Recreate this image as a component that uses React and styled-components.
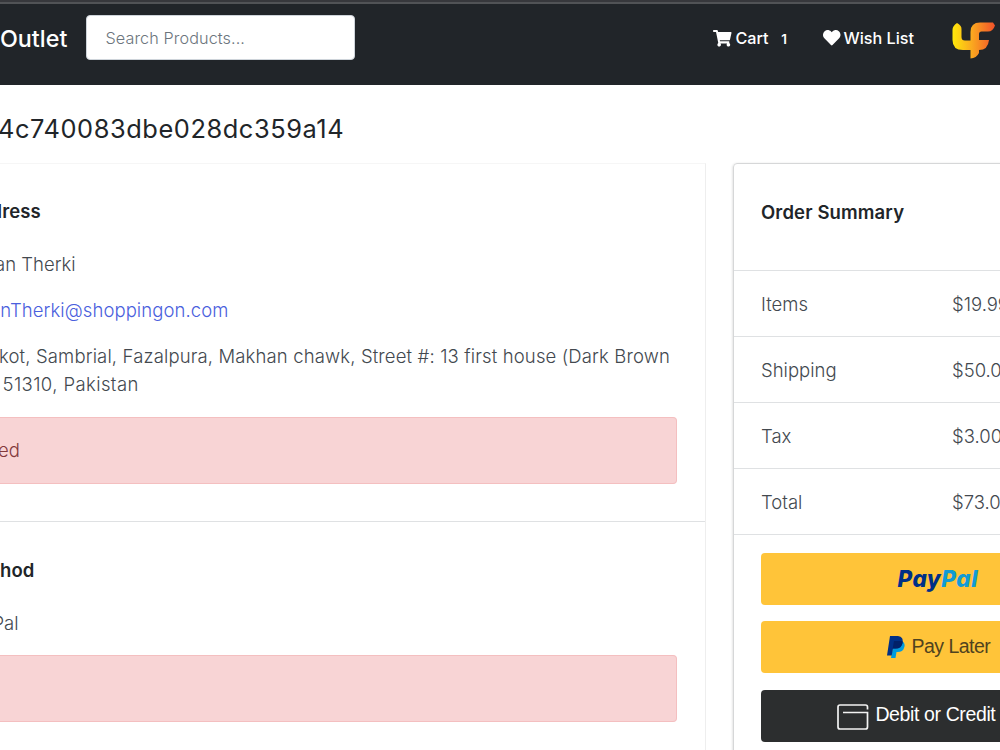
import React from 'react';
import styled, { createGlobalStyle } from 'styled-components';
import { FaShoppingCart, FaHeart } from 'react-icons/fa';

const GlobalStyle = createGlobalStyle`
  * { box-sizing: border-box; }
  body {
    margin: 0;
    background: #fff;
    color: #43494f;
    font-family: Inter, "Liberation Sans", sans-serif;
    font-size: 18.5px;
    font-weight: 350;
    line-height: 27.7px;
    overflow: hidden;
  }
  h1, h2, p { margin: 0; }
`;

const Page = styled.div`
  width: 1000px;
  height: 750px;
  overflow: hidden;
  white-space: nowrap;
`;

const Header = styled.header`
  height: 85px;
  display: flex;
  align-items: flex-start;
  background: #212529;
  border-top: 2px solid #37383c;
  box-shadow: inset 0 2px 0 #515356;
  color: #fff;
`;

const Brand = styled.div`
  width: 86px;
  padding-top: 22.5px;
  font-size: 23.3px;
  font-weight: 500;
`;

const Search = styled.input`
  width: 269px;
  height: 45px;
  margin-top: 13px;
  padding: 0 18.5px;
  border: 1px solid #ced4da;
  border-radius: 4px;
  background: #fff;
  font: 340 16.2px Inter, sans-serif;
  letter-spacing: 0.1px;
  outline: 0;
  &::placeholder { color: #6c757d; opacity: 1; }
`;

const Nav = styled.nav`
  display: flex;
  align-items: center;
  height: 44px;
  margin: 14px 0 0 358px;
  font-size: 16.2px;
  line-height: 28px;
  font-weight: 500;
`;

const NavItem = styled.a`
  display: flex;
  align-items: center;
  gap: ${(p) => p.$gap}px;
  width: ${(p) => p.$width}px;
`;

const Count = styled.span`
  margin-left: 8.5px;
  font-size: 13.5px;
  font-weight: 600;
  position: relative;
  top: 1px;
`;

const LogoSvg = styled.svg`
  flex: none;
  margin-top: 6px;
`;

const Title = styled.h1`
  height: 78px;
  padding-top: 26px;
  margin-left: -2px;
  color: #212529;
  font-size: 25.4px;
  line-height: 36px;
  font-weight: 410;
  letter-spacing: 0.57px;
`;

const Columns = styled.main`
  display: flex;
  gap: 27px;
  height: 600px;
`;

const Details = styled.div`
  width: 706px;
  flex: none;
  border: 1px solid #eee;
  border-left: 0;
  border-top-color: #f6f6f6;
  border-bottom: 0;
`;

const Section = styled.section`
  height: ${(p) => p.$height}px;
  padding: ${(p) => p.$top}px 28px 0 0;
  border-bottom: 1px solid #dfe1e3;
`;

const Heading = styled.h2`
  margin: 0 0 26px ${(p) => p.$shift || 0}px;
  color: #212529;
  font-size: 18.5px;
  line-height: 28px;
  font-weight: 600;
  letter-spacing: 0.13px;
`;

const Line = styled.p`
  margin: 0 0 ${(p) => p.$after || 18.5}px ${(p) => p.$shift || 0}px;
  letter-spacing: ${(p) => p.$spacing || 0}px;
`;

const PostalLine = styled.span`
  display: block;
  padding-left: 3.5px;
  letter-spacing: 0.4px;
`;

const Email = styled.a`
  color: #4a60dd;
`;

const Alert = styled.div`
  height: 67px;
  padding: 19px 0;
  border: 1px solid #f4bfc0;
  border-left: 0;
  border-radius: 0 4px 4px 0;
  background: #f8d4d5;
  color: #83393c;
  text-indent: -2px;
`;

const Summary = styled.aside`
  width: 290px;
  flex: none;
  border: 1px solid #d6d7d8;
  border-radius: 4px 0 0 0;
  box-shadow: 0 1px 3px rgba(0, 0, 0, 0.2);
`;

const SummaryTitle = styled.div`
  height: 107px;
  padding: 34px 27px 0;
  border-bottom: 1px solid #dfe1e3;
`;

const Row = styled.div`
  display: flex;
  align-items: center;
  height: 66px;
  padding: 1px 0 0 27px;
  border-bottom: 1px solid #dfe1e3;
  line-height: 28px;
`;

const Label = styled.span`
  width: 191px;
`;

const Buttons = styled.div`
  display: grid;
  gap: 16.3px;
  padding: 18.2px 0 0 27.4px;
`;

const PayButton = styled.div`
  display: flex;
  align-items: center;
  height: 52px;
  padding-left: ${(p) => p.$inset}px;
  padding-bottom: 1.5px;
  gap: ${(p) => p.$gap || 0}px;
  border-radius: 4px;
  background: ${(p) => (p.$dark ? '#2c2e2f' : '#ffc439')};
  color: ${(p) => (p.$dark ? '#fff' : '#4f431f')};
  font-family: "Liberation Sans", Arial, sans-serif;
  font-size: 19.5px;
  font-weight: 400;
  letter-spacing: ${(p) => (p.$dark ? -0.38 : -0.5)}px;
`;

const Wordmark = styled.span`
  color: #003087;
  font-family: Inter, sans-serif;
  font-size: 22.5px;
  font-style: italic;
  font-weight: 800;
  letter-spacing: 0.55px;
  font-feature-settings: "cv11";
`;

const WordmarkEnd = styled.span`
  color: #119bd5;
`;

const CardSvg = styled.svg`
  flex: none;
  margin-top: 4px;
`;

const rows = [
  ['Items', '$19.99'],
  ['Shipping', '$50.00'],
  ['Tax', '$3.00'],
  ['Total', '$73.00'],
];

const Logo = () => (
  <LogoSvg width="44" height="38" viewBox="0 0 44 38">
    <defs>
      <linearGradient id="flame" x1="0" y1="0" x2="1" y2="0">
        <stop offset="0" stopColor="#ffe80a" />
        <stop offset="0.45" stopColor="#faa91f" />
        <stop offset="1" stopColor="#f1512a" />
      </linearGradient>
    </defs>
    <path
      fill="url(#flame)"
      d="M5 1C8 3 9.500 4 9.500 7V15Q9.500 18.500 13 18.500H18.500V10Q18.500 0.500 28 0.500H41L43 3.500Q41 9.500 36 9.500H29.500Q27 9.500 27 12V18H37Q36 28 27 28V31Q24.500 36 18.500 36.500V28H11Q0.500 28 0.500 18V8Q0.500 4 5 1Z"
    />
  </LogoSvg>
);

const PayPalMark = () => (
  <svg width="18" height="22" viewBox="0 0 18 22">
    <path fill="#009cde" d="M7 5H15Q19 7 17 12Q16 16 10.500 16H9.500L8.500 22H4Z" />
    <path fill="#003087" d="M3 0H11Q17 1 15.500 7Q14.500 12.500 8.500 12.500H6L4.700 19.500H0Z" />
    <path fill="#012169" d="M7 5H15Q16 5.200 15.600 7Q14.500 12.500 8.500 12.500H5.700Z" />
  </svg>
);

const CardIcon = () => (
  <CardSvg width="32" height="26" viewBox="0 0 32 26" fill="none" stroke="#f2f2f2" strokeWidth="1.700">
    <path d="M30.500 5.500V3Q30.500 1 28.500 1H3Q1 1 1 3V23Q1 25 3 25H28.500Q30.500 25 30.500 23V8.500H6" />
  </CardSvg>
);

export default function App() {
  return (
    <Page>
      <GlobalStyle />
      <Header>
        <Brand>Outlet</Brand>
        <Search placeholder="Search Products..." />
        <Nav>
          <NavItem $gap={4} $width={110}>
            <FaShoppingCart size={18.5} />
            Cart
            <Count>1</Count>
          </NavItem>
          <NavItem $gap={3} $width={129}>
            <FaHeart size={17.5} />
            Wish List
          </NavItem>
          <Logo />
        </Nav>
      </Header>
      <Title>4c740083dbe028dc359a14</Title>
      <Columns>
        <Details>
          <Section $height={358} $top={33}>
            <Heading $shift={-9.5}>dress</Heading>
            <Line $shift={-5}>an Therki</Line>
            <Line $shift={-10} $spacing={0.08}>
              <Email>anTherki@shoppingon.com</Email>
            </Line>
            <Line $shift={-1} $spacing={0.14}>
              kot, Sambrial, Fazalpura, Makhan chawk, Street #: 13 first house (Dark Brown
              <PostalLine>51310, Pakistan</PostalLine>
            </Line>
            <Alert>ed</Alert>
          </Section>
          <Section $height={240} $top={34}>
            <Heading>hod</Heading>
            <Line $shift={-7.5} $after={17.5}>Pal</Line>
            <Alert />
          </Section>
        </Details>
        <Summary>
          <SummaryTitle>
            <Heading>Order Summary</Heading>
          </SummaryTitle>
          {rows.map(([label, value]) => (
            <Row key={label}>
              <Label>{label}</Label>
              <span>{value}</span>
            </Row>
          ))}
          <Buttons>
            <PayButton $inset={136}>
              <Wordmark>
                Pay<WordmarkEnd>Pal</WordmarkEnd>
              </Wordmark>
            </PayButton>
            <PayButton $inset={126} $gap={6}>
              <PayPalMark />
              Pay Later
            </PayButton>
            <PayButton $dark $inset={76} $gap={6}>
              <CardIcon />
              Debit or Credit Card
            </PayButton>
          </Buttons>
        </Summary>
      </Columns>
    </Page>
  );
}
